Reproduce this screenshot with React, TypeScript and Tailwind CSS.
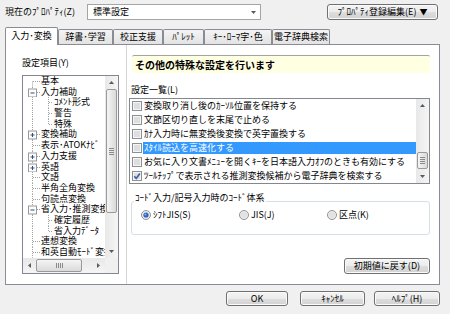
import React from "react";

type TreeItem = { label: string; level: 1 | 2; box?: "+" | "-"; first?: boolean; last?: boolean };

const tree: TreeItem[] = [
  { label: "基本", level: 1, first: true },
  { label: "入力補助", level: 1, box: "-" },
  { label: "ｺﾒﾝﾄ形式", level: 2 },
  { label: "警告", level: 2 },
  { label: "特殊", level: 2, last: true },
  { label: "変換補助", level: 1, box: "+" },
  { label: "表示･ATOKﾅﾋﾞ", level: 1 },
  { label: "入力支援", level: 1, box: "+" },
  { label: "英語", level: 1, box: "+" },
  { label: "文語", level: 1 },
  { label: "半角全角変換", level: 1 },
  { label: "句読点変換", level: 1 },
  { label: "省入力･推測変換", level: 1, box: "-" },
  { label: "確定履歴", level: 2 },
  { label: "省入力ﾃﾞｰﾀ", level: 2, last: true },
  { label: "連想変換", level: 1 },
  { label: "和英自動ﾓｰﾄﾞ変換", level: 1 },
];

const settings = [
  { label: "変換取り消し後のｶｰｿﾙ位置を保持する" },
  { label: "文節区切り直しを末尾で止める" },
  { label: "ｶﾅ入力時に無変換後変換で英字置換する" },
  { label: "ｽﾀｲﾙ読込を高速化する", selected: true },
  { label: "お気に入り文書ﾒﾆｭｰを開くｷｰを日本語入力ｵﾌのときも有効にする" },
  { label: "ﾂｰﾙﾁｯﾌﾟで表示される推測変換候補から電子辞典を検索する", checked: true },
];

const tabs = [
  { label: "入力･変換", w: "w-[53px]", active: true },
  { label: "辞書･学習", w: "w-[55px]" },
  { label: "校正支援", w: "w-[50px]" },
  { label: "ﾊﾟﾚｯﾄ", w: "w-[41px]" },
  { label: "ｷｰ･ﾛｰﾏ字･色", w: "w-[68px]" },
  { label: "電子辞典検索", w: "w-[58px]" },
];

const btn =
  "border border-[#707070] rounded-[3px] bg-[linear-gradient(#f4f4f4,#ececec_50%,#dedede_50%,#d2d2d2)] shadow-[inset_0_0_0_1px_#fbfbfb] flex items-center justify-center leading-[10px]";

const ROW_H = 10.7;

function TreeLines({ item }: { item: TreeItem }) {
  const h = ROW_H;
  const mid = 5.5;
  const w = item.level === 1 ? 18 : 31;
  const dot = { stroke: "#a0a0a0", strokeWidth: 1, strokeDasharray: "1 1", fill: "none" };
  return (
    <svg width={w} height={h} viewBox={`0 0 ${w} ${h}`} className="shrink-0">
      <line x1={9.5} y1={item.first ? mid : 0} x2={9.5} y2={h} {...dot} />
      {item.level === 1 ? (
        <line x1={10} y1={mid} x2={17} y2={mid} {...dot} />
      ) : (
        <>
          <line x1={25.5} y1={0} x2={25.5} y2={item.last ? mid : h} {...dot} />
          <line x1={26} y1={mid} x2={30} y2={mid} {...dot} />
        </>
      )}
      {item.box && (
        <>
          <rect x={5.5} y={mid - 3.5} width={8} height={8} fill="#fcfcfc" stroke="#989898" />
          <line x1={7.5} y1={mid + 0.5} x2={11.5} y2={mid + 0.5} stroke="#2b4f8a" />
          {item.box === "+" && <line x1={9.5} y1={mid - 1.5} x2={9.5} y2={mid + 2.5} stroke="#2b4f8a" />}
        </>
      )}
    </svg>
  );
}

function Arrow({ dir }: { dir: "up" | "down" | "left" | "right" }) {
  if (dir === "up")
    return (
      <svg width="5" height="3">
        <polygon points="0,3 2.5,0 5,3" fill="#5a5a5a" />
      </svg>
    );
  if (dir === "down")
    return (
      <svg width="5" height="3">
        <polygon points="0,0 5,0 2.5,3" fill="#5a5a5a" />
      </svg>
    );
  if (dir === "left")
    return (
      <svg width="3" height="5">
        <polygon points="3,0 0,2.5 3,5" fill="#5a5a5a" />
      </svg>
    );
  return (
    <svg width="3" height="5">
      <polygon points="0,0 3,2.5 0,5" fill="#5a5a5a" />
    </svg>
  );
}

function VGrip() {
  return (
    <div className="flex flex-col gap-[1px]">
      {[0, 1, 2, 3].map((i) => (
        <div key={i} className="w-[5px] h-px bg-[#8a8a8a]" />
      ))}
    </div>
  );
}

function HGrip() {
  return (
    <div className="flex gap-[1px]">
      {[0, 1, 2, 3].map((i) => (
        <div key={i} className="w-px h-[5px] bg-[#8a8a8a]" />
      ))}
    </div>
  );
}

function Checkbox({ checked }: { checked?: boolean }) {
  return (
    <svg width="10" height="10" className="shrink-0">
      <rect x="0.5" y="0.5" width="9" height="9" fill="#f6f6f6" stroke="#8e8f8f" />
      <rect x="2" y="2" width="6" height="6" fill="#dcdee2" />
      {checked && <path d="M2.3 5.2 L4.2 7.4 L7.9 2.4" stroke="#3c5fa8" strokeWidth="1.6" fill="none" />}
    </svg>
  );
}

function Radio({ on }: { on?: boolean }) {
  return (
    <svg width="10" height="10" className="shrink-0">
      <circle cx="5" cy="5" r="4.5" fill="#eeeeee" stroke="#929292" />
      <circle cx="5" cy="5" r="3" fill="#e2e2e2" />
      {on && <circle cx="5" cy="5" r="2.6" fill="#2a66c2" />}
      {on && <circle cx="4.4" cy="4.4" r="1" fill="#8fb8f0" />}
    </svg>
  );
}

export default function App() {
  return (
    <div className="w-[450px] h-[314px] bg-[#f0f0f0] text-black text-[9px] font-['Noto_Sans_CJK_JP',sans-serif] flex flex-col overflow-hidden select-none">
      {/* property row */}
      <div className="flex items-center h-[16px] mt-[4px] pl-[5px] pr-[12px]">
        <div className="w-[82px] leading-[16px] whitespace-nowrap">現在のﾌﾟﾛﾊﾟﾃｨ(Z)</div>
        <div className="w-[174px] h-[16px] bg-white border border-[#a5a5a5] flex items-center pl-[5px] pr-[4px]">
          <span className="flex-1 leading-[14px]">標準設定</span>
          <Arrow dir="down" />
        </div>
        <div className="flex-1" />
        <button className={`${btn} w-[111px] h-[16px] gap-[3px]`}>
          <span>ﾌﾟﾛﾊﾟﾃｨ登録編集(E)</span>
          <span className="text-[8px]">▼</span>
        </button>
      </div>

      {/* tabs */}
      <div className="flex items-end h-[17px] mt-[7px] pl-[5px]">
        {tabs.map((t) =>
          t.active ? (
            <div
              key={t.label}
              className={`${t.w} h-[18px] -mb-px z-10 bg-white border border-b-0 border-[#898c95] rounded-t-[2px] flex justify-center pt-[3px] leading-[10px] whitespace-nowrap`}
            >
              {t.label}
            </div>
          ) : (
            <div
              key={t.label}
              className={`${t.w} h-[15px] bg-gradient-to-b from-[#f4f4f4] to-[#e3e3e3] border border-b-0 border-[#898c95] rounded-t-[2px] flex items-center justify-center leading-[10px] whitespace-nowrap`}
            >
              {t.label}
            </div>
          )
        )}
      </div>

      {/* tab page */}
      <div className="ml-[5px] w-[435px] h-[241px] border border-[#898c95] bg-white flex">
        {/* left: tree */}
        <div className="w-[121px] h-full border-r border-[#d6d6d6] flex flex-col pl-[16px]">
          <div className="mt-[13px] h-[10px] leading-[10px]">設定項目(Y)</div>
          <div className="mt-[7px] w-[97px] h-[199px] border border-[#828790] flex flex-col">
            <div className="flex h-[182px]">
              <div className="w-[82px] overflow-hidden flex flex-col">
                {tree.map((it) => (
                  <div key={it.label} className="flex items-center h-[10.7px] whitespace-nowrap text-[9px] leading-[10.7px]">
                    <TreeLines item={it} />
                    <span>{it.label}</span>
                  </div>
                ))}
              </div>
              <div className="w-[13px] flex flex-col bg-gradient-to-r from-[#e8e8e8] to-[#f5f5f5]">
                <div className="h-[13px] flex items-center justify-center">
                  <Arrow dir="up" />
                </div>
                <div className="h-[124px] mx-px rounded-[2px] border border-[#9a9a9a] bg-gradient-to-r from-[#f5f5f5] to-[#dadada] flex items-center justify-center">
                  <VGrip />
                </div>
                <div className="flex-1" />
                <div className="h-[13px] flex items-center justify-center">
                  <Arrow dir="down" />
                </div>
              </div>
            </div>
            <div className="flex h-[15px] bg-gradient-to-b from-[#e8e8e8] to-[#f5f5f5]">
              <div className="w-[13px] flex items-center justify-center">
                <Arrow dir="left" />
              </div>
              <div className="w-[46px] my-px rounded-[2px] border border-[#9a9a9a] bg-gradient-to-b from-[#f5f5f5] to-[#dadada] flex items-center justify-center">
                <HGrip />
              </div>
              <div className="flex-1" />
              <div className="w-[13px] flex items-center justify-center">
                <Arrow dir="right" />
              </div>
              <div className="w-[13px] bg-[#f0f0f0]" />
            </div>
          </div>
        </div>

        {/* right: settings */}
        <div className="flex-1 flex flex-col pr-[9px]">
          <div className="mt-[10px] ml-[5px] h-[18px] bg-[#ffffe1] border-t border-[#a3a3a3] rounded-[2px] font-bold text-[10px] leading-[17px] pl-[3px]">
            その他の特殊な設定を行います
          </div>
          <div className="mt-[12px] ml-[4px] h-[10px] leading-[10px]">設定一覧(L)</div>
          <div className="mt-[3px] ml-[2px] h-[86px] border border-[#828790] flex">
            <div className="flex-1 flex flex-col overflow-hidden">
              {settings.map((s) => (
                <div key={s.label} className="flex items-center h-[14px] pl-[2px] whitespace-nowrap">
                  <Checkbox checked={s.checked} />
                  <div
                    className={`flex-1 ml-px h-[12px] leading-[12px] pl-px ${s.selected ? "bg-[#3399ff] text-white" : ""}`}
                  >
                    {s.label}
                  </div>
                </div>
              ))}
            </div>
            <div className="w-[13px] flex flex-col bg-gradient-to-r from-[#e8e8e8] to-[#f5f5f5]">
              <div className="h-[13px] flex items-center justify-center">
                <Arrow dir="up" />
              </div>
              <div className="h-[40px]" />
              <div className="h-[17px] mx-px rounded-[2px] border border-[#9a9a9a] bg-gradient-to-r from-[#f5f5f5] to-[#dadada] flex items-center justify-center">
                <VGrip />
              </div>
              <div className="flex-1" />
              <div className="h-[13px] flex items-center justify-center">
                <Arrow dir="down" />
              </div>
            </div>
          </div>

          <fieldset className="mt-[9px] ml-[4px] border border-[#d5dfe5] rounded-[3px] pb-[14px]">
            <legend className="ml-[2px] px-px h-[17px] leading-[10px]">ｺｰﾄﾞ入力/記号入力時のｺｰﾄﾞ体系</legend>
            <div className="flex items-center h-[10px] pl-[9px] leading-[10px]">
              <div className="w-[98px] flex items-center gap-[2px]">
                <Radio on />
                <span>ｼﾌﾄJIS(S)</span>
              </div>
              <div className="w-[88px] flex items-center gap-[2px]">
                <Radio />
                <span>JIS(J)</span>
              </div>
              <div className="flex items-center gap-[2px]">
                <Radio />
                <span>区点(K)</span>
              </div>
            </div>
          </fieldset>

          <button className={`${btn} mt-[23px] self-end w-[86px] h-[16px]`}>初期値に戻す(D)</button>
        </div>
      </div>

      {/* dialog buttons */}
      <div className="flex justify-end h-[15px] mt-[6px] pr-[10px]">
        <button className={`${btn} w-[62px] h-[15px]`}>OK</button>
        <button className={`${btn} ml-[12px] w-[65px] h-[15px]`}>ｷｬﾝｾﾙ</button>
        <button className={`${btn} ml-[9px] w-[66px] h-[15px]`}>ﾍﾙﾌﾟ(H)</button>
      </div>
    </div>
  );
}
